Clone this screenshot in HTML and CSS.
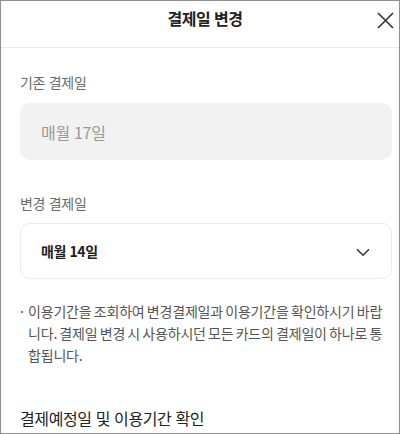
FILE: index.html
```html
<!DOCTYPE html>
<html lang="ko">
<head>
<meta charset="utf-8">
<title>결제일 변경</title>
<link rel="stylesheet" href="styles.css">
</head>
<body>
<div class="frame">
  <header class="header">
    <h1 class="title">결제일 변경</h1>
    <button class="close" aria-label="닫기">
      <svg width="17" height="17" viewBox="0 0 17 17"><path d="M1 1L16 16M16 1L1 16" stroke="#333" stroke-width="1.6" fill="none"/></svg>
    </button>
  </header>
  <main class="content">
    <div class="label label-first">기존 결제일</div>
    <div class="field field-disabled">매월 17일</div>
    <div class="label label-second">변경 결제일</div>
    <div class="field field-select">
      <span class="select-value">매월 14일</span>
      <svg class="chevron" width="14" height="9" viewBox="0 0 14 9"><path d="M1 1.2L7 7.2L13 1.2" stroke="#333" stroke-width="1.5" fill="none"/></svg>
    </div>
    <p class="note"><span class="dot">·</span><span class="note-text">이용기간을 조회하여 변경결제일과 이용기간을 확인하시기 바랍니다. 결제일 변경 시 사용하시던 모든 카드의 결제일이 하나로 통합됩니다.</span></p>
    <h2 class="section-title">결제예정일 및 이용기간 확인</h2>
  </main>
</div>
</body>
</html>
```

FILE: styles.css
```css
* { box-sizing: border-box; }
html, body { margin: 0; padding: 0; background: #fff; }
body { font-family: "Noto Sans CJK KR", "Noto Sans", sans-serif; color: #222; }

.frame {
  width: 400px;
  height: 434px;
  border: 1px solid #8e8e8e;
  overflow: hidden;
  position: relative;
}

.header {
  position: relative;
  height: 47px;
  padding-bottom: 12px;
  border-bottom: 1px solid #ebebeb;
}
.title {
  margin: 0;
  font-size: 16px;
  font-weight: 700;
  line-height: 34px;
  text-align: center;
  padding-left: 10px;
  color: #222;
  letter-spacing: -0.5px;
}
.close {
  position: absolute;
  right: 5px;
  top: 11px;
  width: 17px;
  height: 17px;
  padding: 0;
  border: 0;
  background: none;
  display: block;
}
.close svg { display: block; }

.content {
  padding: 0 7px 0 19px;
}

.label {
  font-size: 14px;
  line-height: 20px;
  color: #6b6b6b;
  letter-spacing: -0.3px;
}
.label-first { margin-top: 24px; }
.label-second { margin-top: 33px; }

.field {
  height: 57px;
  border-radius: 10px;
  display: flex;
  align-items: center;
  padding-left: 21px;
  margin-top: 11px;
}
.field-disabled {
  background: #f2f2f2;
  color: #9a9a9a;
  font-size: 16px;
  letter-spacing: -0.3px;
}
.field-select {
  height: 56px;
  margin-top: 10px;
  border: 1px solid #ececec;
  padding-left: 20px;
  padding-right: 21px;
  justify-content: space-between;
}
.select-value {
  font-size: 14px;
  font-weight: 700;
  color: #1e1e1e;
  letter-spacing: -0.4px;
}
.chevron { display: block; margin-top: 2px; }

.note {
  display: flex;
  margin: 21px 0 0;
  font-size: 14px;
  line-height: 22px;
  color: #555;
  letter-spacing: -0.18px;
  word-spacing: -1.5px;
}
.dot {
  width: 8px;
  flex: none;
}
.note-text { flex: 1; padding-right: 4px; }

.section-title {
  margin: 41px 0 0;
  font-size: 16px;
  font-weight: 400;
  line-height: 22px;
  color: #222;
  letter-spacing: -0.4px;
}
```
